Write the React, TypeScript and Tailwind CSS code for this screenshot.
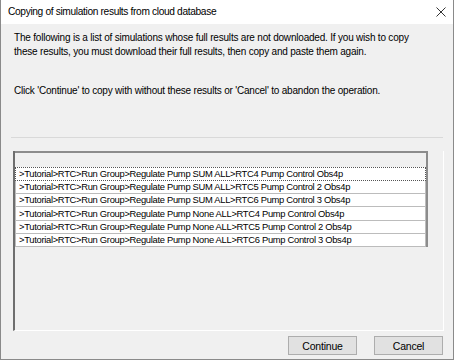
const rows = [
  ">Tutorial>RTC>Run Group>Regulate Pump SUM ALL>RTC4 Pump Control Obs4p",
  ">Tutorial>RTC>Run Group>Regulate Pump SUM ALL>RTC5 Pump Control 2 Obs4p",
  ">Tutorial>RTC>Run Group>Regulate Pump SUM ALL>RTC6 Pump Control 3 Obs4p",
  ">Tutorial>RTC>Run Group>Regulate Pump None ALL>RTC4 Pump Control Obs4p",
  ">Tutorial>RTC>Run Group>Regulate Pump None ALL>RTC5 Pump Control 2 Obs4p",
  ">Tutorial>RTC>Run Group>Regulate Pump None ALL>RTC6 Pump Control 3 Obs4p",
];

const rowHeights = ["h-[14px]", "h-[13px]", "h-[13px]", "h-[14px]", "h-[13px]", "h-[13px]"];

export default function App() {
  return (
    <div className="flex h-[360px] w-[454px] flex-col overflow-hidden border-x border-b border-[#8a8a8a] bg-[#f0f0f0] font-['Liberation_Sans',Arial,sans-serif] text-black">
      <div className="flex h-[24px] shrink-0 items-center justify-between bg-white pl-[7px] pr-[7px] text-[10.2px] tracking-[-0.35px]">
        <span>Copying of simulation results from cloud database</span>
        <svg width="10" height="10" viewBox="0 0 10 10" className="text-[#333]">
          <path d="M0.5 0.5 L9.5 9.5 M9.5 0.5 L0.5 9.5" stroke="currentColor" strokeWidth="1" />
        </svg>
      </div>

      <div className="flex flex-1 flex-col px-[13px] text-[10px] leading-[14px] tracking-[-0.2px]">
        <p className="mt-[7px] whitespace-nowrap">
          The following is a list of simulations whose full results are not downloaded. If you wish to copy
          <br />
          these results, you must download their full results, then copy and paste them again.
        </p>
        <p className="mt-[25px] whitespace-nowrap">
          Click 'Continue' to copy with without these results or 'Cancel' to abandon the operation.
        </p>

        <div className="-mx-[3px] mt-[39px] h-[1px] shrink-0 bg-[#d9d9d9]" />

        <div className="-ml-[1px] -mr-[4px] mt-[13px] flex h-[180px] shrink-0 flex-col border-b border-l-2 border-r border-b-white border-l-[#6e6e6e] border-r-white">
          <div className="h-[16px] w-[413px] shrink-0 border-r-2 border-t-2 border-[#8c8c8c]" />
          <div className="flex w-[413px] flex-col border-r-2 border-[#8c8c8c]">
            {rows.map((r, i) => (
              <div
                key={i}
                className={`${rowHeights[i]} flex items-center whitespace-nowrap bg-white pl-[3px] text-[9.4px] leading-none tracking-[-0.3px] ${
                  i === 0 ? "border border-dotted border-[#555]" : "border-x border-b border-[#bcbcbc]"
                }`}
              >
                {r}
              </div>
            ))}
          </div>
        </div>

        <div className="-mr-[3px] mt-[5px] flex justify-end gap-[17px]">
          <button className="h-[19px] w-[69px] border border-[#adadad] bg-[#e1e1e1] text-[10.5px]">Continue</button>
          <button className="h-[19px] w-[69px] border border-[#adadad] bg-[#e1e1e1] text-[10.5px]">Cancel</button>
        </div>
      </div>
    </div>
  );
}
